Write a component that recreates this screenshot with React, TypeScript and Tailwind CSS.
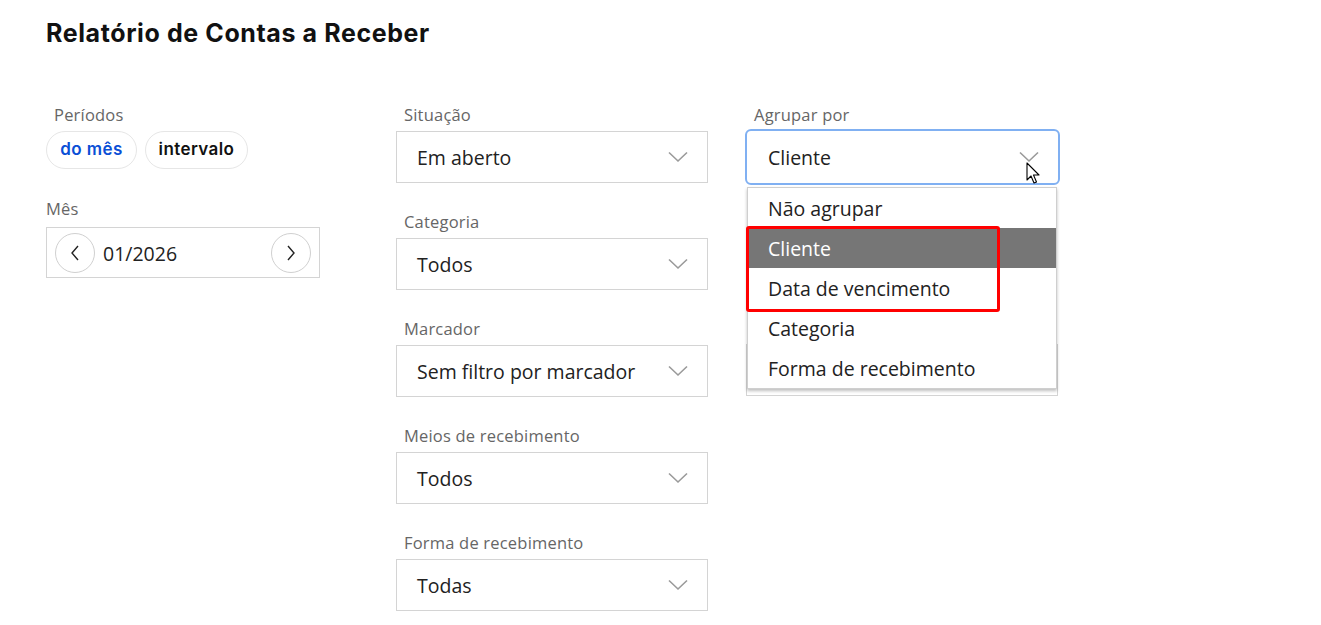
import React from "react";

const Chevron = () => (
  <svg width="20" height="12" viewBox="0 0 20 12" fill="none" className="shrink-0">
    <path d="M1 1.5 L10 10 L19 1.5" stroke="#9a9a9a" strokeWidth="1.6" />
  </svg>
);

const Select = ({ value }: { value: string }) => (
  <div className="flex h-[52px] w-[312px] items-center justify-between border border-[#d4d4d4] bg-white pl-[20px] pr-[19px]">
    <span className="text-[19.5px] leading-[26px] text-[#222] translate-y-[1px]">{value}</span>
    <Chevron />
  </div>
);

const Label = ({ children, className = "" }: { children: React.ReactNode; className?: string }) => (
  <div className={"h-[22px] text-[16.5px] leading-[22px] tracking-[0.2px] text-[#666] " + className}>{children}</div>
);

const Field = ({ label, value }: { label: string; value: string }) => (
  <div className="flex flex-col">
    <Label className="mb-[5px] pl-2">{label}</Label>
    <Select value={value} />
  </div>
);

const Arrow = ({ dir }: { dir: "l" | "r" }) => (
  <div className="flex h-[40px] w-[40px] items-center justify-center rounded-full border border-[#d0d0d0] bg-white">
    <svg width="10" height="16" viewBox="0 0 10 16" fill="none">
      {dir === "l" ? (
        <path d="M8 1 L2 8 L8 15" stroke="#222" strokeWidth="1.4" />
      ) : (
        <path d="M2 1 L8 8 L2 15" stroke="#222" strokeWidth="1.4" />
      )}
    </svg>
  </div>
);

export default function App() {
  return (
    <div
      className="min-h-[625px] w-full bg-white pl-[46px] pt-[17px]"
      style={{ fontFamily: '"Open Sans", "Noto Sans", sans-serif' }}
    >
      <h1
        className="text-[25px] font-bold leading-[32px] tracking-[0.6px] text-[#111]"
        style={{ fontFamily: 'Inter, "Noto Sans", sans-serif' }}
      >
        Relatório de Contas a Receber
      </h1>

      <div className="mt-[55px] flex">
        {/* Column 1 */}
        <div className="flex w-[350px] flex-col">
          <Label className="mb-[5px] pl-2">Períodos</Label>
          <div className="flex gap-[8px]" style={{ fontFamily: 'Inter, "Noto Sans", sans-serif' }}>
            <div className="flex h-[38px] w-[91px] items-center justify-center rounded-full border border-[#e6e6e6] text-[17px] font-semibold tracking-[0.4px] text-[#0a4fd6]">
              do mês
            </div>
            <div className="flex h-[38px] w-[103px] items-center justify-center rounded-full border border-[#e6e6e6] text-[17px] font-semibold tracking-[0.4px] text-[#111]">
              intervalo
            </div>
          </div>
          <Label className="mt-[29px] mb-[7px]">Mês</Label>
          <div className="flex h-[51px] w-[274px] items-center border border-[#d4d4d4] px-[8px]">
            <Arrow dir="l" />
            <span className="ml-[8px] flex-1 text-[19.5px] text-[#222] translate-y-[1px]">01/2026</span>
            <Arrow dir="r" />
          </div>
        </div>

        {/* Column 2 */}
        <div className="flex w-[350px] flex-col gap-[28px]">
          <Field label="Situação" value="Em aberto" />
          <Field label="Categoria" value="Todos" />
          <Field label="Marcador" value="Sem filtro por marcador" />
          <Field label="Meios de recebimento" value="Todos" />
          <Field label="Forma de recebimento" value="Todas" />
        </div>

        {/* Column 3 */}
        <div className="relative flex w-[320px] flex-col">
          <Label className="mb-[3px] pl-2">Agrupar por</Label>
          <div className="-ml-px flex h-[56px] w-[315px] items-center justify-between rounded-[6px] border-2 border-[#80b0f2] bg-white pl-[21px] pr-[19px]">
            <span className="text-[19.5px] leading-[26px] text-[#222] translate-y-[1px]">Cliente</span>
            <Chevron />
          </div>
          <div className="mt-[159px] h-[52px] w-[312px] border border-[#d4d4d4] bg-white" />

          {/* Dropdown list */}
          <div className="absolute left-px top-[83px] w-[310px] border border-[#cfcfcf] bg-white shadow-[0_2px_3px_rgba(0,0,0,0.25)]">
            {["Não agrupar", "Cliente", "Data de vencimento", "Categoria", "Forma de recebimento"].map((item) => (
              <div
                key={item}
                className={
                  item === "Cliente"
                    ? "flex h-[40px] items-center bg-[#767676] pl-[20px] pt-[1px] text-[19.5px] text-white"
                    : "flex h-[40px] items-center pl-[20px] pt-[1px] text-[19.5px] text-[#222]"
                }
              >
                {item}
              </div>
            ))}
          </div>

          {/* Red highlight */}
          <div className="pointer-events-none absolute left-0 top-[122px] h-[86px] w-[254px] rounded-[3px] border-[3px] border-[#ff0000]" />

          {/* Mouse cursor */}
          <svg
            className="pointer-events-none absolute left-[280px] top-[58px]"
            width="16"
            height="24"
            viewBox="0 0 16 24"
          >
            <path
              d="M1 1 L1 18 L5 14 L8 21 L10.5 20 L7.5 13 L13 13 Z"
              fill="#fff"
              stroke="#000"
              strokeWidth="1.1"
              strokeLinejoin="round"
            />
          </svg>
        </div>
      </div>
    </div>
  );
}
